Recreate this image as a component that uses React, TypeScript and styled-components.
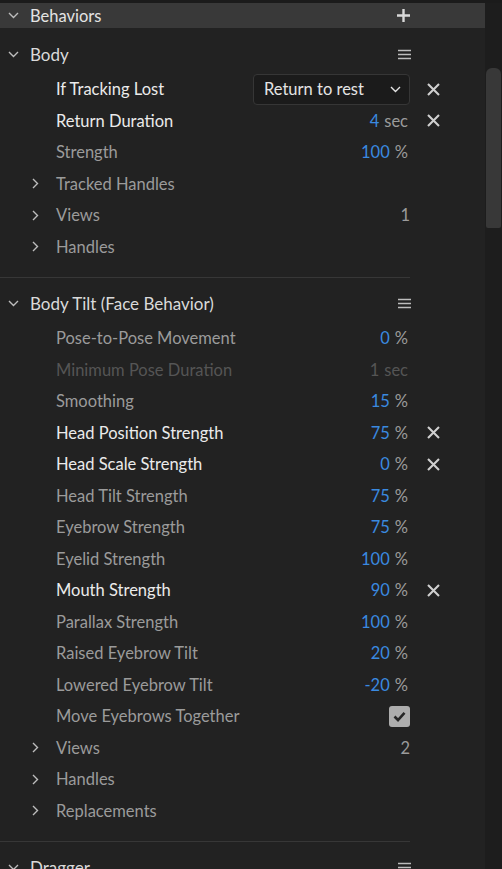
import React from "react";
import styled, { createGlobalStyle } from "styled-components";

const GlobalStyle = createGlobalStyle`
  html, body {
    margin: 0;
    padding: 0;
    background: #1b1b1b;
  }
  body {
    font-family: Lato, "Noto Sans", sans-serif;
    font-size: 16.5px;
    -webkit-font-smoothing: antialiased;
  }
`;

const Frame = styled.div`
  display: flex;
  width: 502px;
  height: 869px;
  overflow: hidden;
  padding-top: 3px;
  box-sizing: border-box;
`;

const Main = styled.div`
  width: 485px;
  flex: none;
  background: #222222;
  overflow: hidden;
`;

const Track = styled.div`
  flex: 1;
  background: #1d1d1d;
  padding-top: 65px;
  display: flex;
  justify-content: center;
  align-items: flex-start;
`;

const Thumb = styled.div`
  width: 15px;
  height: 160px;
  background: #383838;
  border-radius: 6px 6px 2px 2px;
`;

const TopBar = styled.div`
  height: 25px;
  background: #393939;
  display: flex;
  align-items: center;
  padding-right: 74px;
  color: #e4e4e4;
`;

const Spacer = styled.div`
  flex: 1;
`;

const Caret = styled.span<{ $w: number; $pad?: number }>`
  width: ${(p) => p.$w}px;
  padding-left: ${(p) => p.$pad ?? 0}px;
  box-sizing: border-box;
  display: flex;
  align-items: center;
  justify-content: center;
  flex: none;
  color: #bdbdbd;
`;

const Title = styled.span`
  margin-left: 4px;
  white-space: nowrap;
`;

const Section = styled.section<{ $top: number }>`
  padding-top: ${(p) => p.$top}px;
  padding-bottom: 14.5px;
`;

const SectionHeader = styled.div`
  height: 32px;
  display: flex;
  align-items: center;
  padding-right: 74px;
  color: #dadada;
  font-size: 17px;
`;

const Rows = styled.div`
  padding-top: 3.5px;
`;

const Row = styled.div`
  height: 31.5px;
  display: flex;
  align-items: center;
`;

const Label = styled.span<{ $tone: "strong" | "normal" | "off" }>`
  flex: 1;
  min-width: 0;
  white-space: nowrap;
  color: ${(p) =>
    p.$tone === "strong" ? "#ebebeb" : p.$tone === "off" ? "#555555" : "#9b9b9b"};
`;

const ValueCell = styled.span`
  flex: none;
  display: flex;
  justify-content: flex-end;
  align-items: center;
  gap: 5px;
  padding-right: 2px;
`;

const Num = styled.span<{ $off?: boolean }>`
  color: ${(p) => (p.$off ? "#555555" : "#3a8ae0")};
`;

const Unit = styled.span<{ $off?: boolean }>`
  color: ${(p) => (p.$off ? "#555555" : "#9b9b9b")};
`;

const Count = styled.span`
  color: #9b9b9b;
  margin-right: -2px;
`;

const ResetCell = styled.span`
  width: 75px;
  flex: none;
  display: flex;
  padding-left: 17px;
  box-sizing: border-box;
  color: #d0d0d0;
`;

const Select = styled.div`
  width: 157px;
  height: 31px;
  box-sizing: border-box;
  margin-right: -2px;
  background: #1b1b1b;
  border: 1px solid #363636;
  border-radius: 4px;
  display: flex;
  align-items: center;
  justify-content: space-between;
  padding: 0 8px 0 10px;
  color: #e4e4e4;
`;

const Check = styled.span`
  width: 21px;
  height: 21px;
  margin-right: -2px;
  border-radius: 3px;
  background: #adadad;
  display: flex;
  align-items: center;
  justify-content: center;
`;

const Divider = styled.div`
  width: 410px;
  height: 1px;
  background: #373737;
`;

const ChevronDown = () => (
  <svg width="11" height="7" viewBox="0 0 11 7">
    <path d="M1 1l4.5 4.5L10 1" fill="none" stroke="currentColor" strokeWidth="1.4" />
  </svg>
);

const ChevronRight = () => (
  <svg width="7" height="11" viewBox="0 0 7 11">
    <path d="M1 1l4.5 4.5L1 10" fill="none" stroke="currentColor" strokeWidth="1.4" />
  </svg>
);

const Plus = () => (
  <svg width="15" height="15" viewBox="0 0 15 15">
    <path d="M7.5 1v13M1 7.5h13" stroke="#d8d8d8" strokeWidth="2.4" />
  </svg>
);

const Menu = () => (
  <svg width="13" height="11" viewBox="0 0 13 11">
    <path d="M0 1.5h13M0 5.5h13M0 9.5h13" stroke="#bdbdbd" strokeWidth="1.3" />
  </svg>
);

const Cross = () => (
  <svg width="13" height="13" viewBox="0 0 13 13">
    <path d="M1 1l11 11M12 1L1 12" stroke="currentColor" strokeWidth="2.1" />
  </svg>
);

const Tick = () => (
  <svg width="13" height="11" viewBox="0 0 13 11">
    <path d="M1.5 5.5l3.5 3.5L11.5 1.8" fill="none" stroke="#262626" strokeWidth="2.6" />
  </svg>
);

type Tone = "strong" | "normal" | "off";

type Item =
  | { kind: "num"; label: string; value: string; unit: string; tone?: Tone; reset?: boolean }
  | { kind: "select"; label: string; value: string }
  | { kind: "check"; label: string }
  | { kind: "group"; label: string; count?: string };

const PropRow = ({ item }: { item: Item }) => {
  if (item.kind === "group") {
    return (
      <Row>
        <Caret $w={56} $pad={15}>
          <ChevronRight />
        </Caret>
        <Label $tone="normal">{item.label}</Label>
        <ValueCell>{item.count && <Count>{item.count}</Count>}</ValueCell>
        <ResetCell />
      </Row>
    );
  }
  if (item.kind === "select") {
    return (
      <Row>
        <Caret $w={56} />
        <Label $tone="strong">{item.label}</Label>
        <ValueCell>
          <Select>
            {item.value}
            <ChevronDown />
          </Select>
        </ValueCell>
        <ResetCell>
          <Cross />
        </ResetCell>
      </Row>
    );
  }
  if (item.kind === "check") {
    return (
      <Row>
        <Caret $w={56} />
        <Label $tone="normal">{item.label}</Label>
        <ValueCell>
          <Check>
            <Tick />
          </Check>
        </ValueCell>
        <ResetCell />
      </Row>
    );
  }
  const off = item.tone === "off";
  return (
    <Row>
      <Caret $w={56} />
      <Label $tone={item.tone ?? (item.reset ? "strong" : "normal")}>{item.label}</Label>
      <ValueCell>
        <Num $off={off}>{item.value}</Num>
        <Unit $off={off}>{item.unit}</Unit>
      </ValueCell>
      <ResetCell>{item.reset && <Cross />}</ResetCell>
    </Row>
  );
};

const bodyItems: Item[] = [
  { kind: "select", label: "If Tracking Lost", value: "Return to rest" },
  { kind: "num", label: "Return Duration", value: "4", unit: "sec", reset: true },
  { kind: "num", label: "Strength", value: "100", unit: "%" },
  { kind: "group", label: "Tracked Handles" },
  { kind: "group", label: "Views", count: "1" },
  { kind: "group", label: "Handles" },
];

const tiltItems: Item[] = [
  { kind: "num", label: "Pose-to-Pose Movement", value: "0", unit: "%" },
  { kind: "num", label: "Minimum Pose Duration", value: "1", unit: "sec", tone: "off" },
  { kind: "num", label: "Smoothing", value: "15", unit: "%" },
  { kind: "num", label: "Head Position Strength", value: "75", unit: "%", reset: true },
  { kind: "num", label: "Head Scale Strength", value: "0", unit: "%", reset: true },
  { kind: "num", label: "Head Tilt Strength", value: "75", unit: "%" },
  { kind: "num", label: "Eyebrow Strength", value: "75", unit: "%" },
  { kind: "num", label: "Eyelid Strength", value: "100", unit: "%" },
  { kind: "num", label: "Mouth Strength", value: "90", unit: "%", reset: true },
  { kind: "num", label: "Parallax Strength", value: "100", unit: "%" },
  { kind: "num", label: "Raised Eyebrow Tilt", value: "20", unit: "%" },
  { kind: "num", label: "Lowered Eyebrow Tilt", value: "-20", unit: "%" },
  { kind: "check", label: "Move Eyebrows Together" },
  { kind: "group", label: "Views", count: "2" },
  { kind: "group", label: "Handles" },
  { kind: "group", label: "Replacements" },
];

const Header = ({ title }: { title: string }) => (
  <SectionHeader>
    <Caret $w={26}>
      <ChevronDown />
    </Caret>
    <Title>{title}</Title>
    <Spacer />
    <Menu />
  </SectionHeader>
);

const Behavior = ({ title, items, top }: { title: string; items: Item[]; top: number }) => (
  <>
    <Section $top={top}>
      <Header title={title} />
      <Rows>
        {items.map((it, i) => (
          <PropRow key={i} item={it} />
        ))}
      </Rows>
    </Section>
    <Divider />
  </>
);

export default function App() {
  return (
    <>
      <GlobalStyle />
      <Frame>
        <Main>
          <TopBar>
            <Caret $w={26}>
              <ChevronDown />
            </Caret>
            <Title>Behaviors</Title>
            <Spacer />
            <Plus />
          </TopBar>
          <Behavior title="Body" items={bodyItems} top={10} />
          <Behavior title="Body Tilt (Face Behavior)" items={tiltItems} top={9} />
          <Section $top={9}>
            <Header title="Dragger" />
          </Section>
        </Main>
        <Track>
          <Thumb />
        </Track>
      </Frame>
    </>
  );
}
